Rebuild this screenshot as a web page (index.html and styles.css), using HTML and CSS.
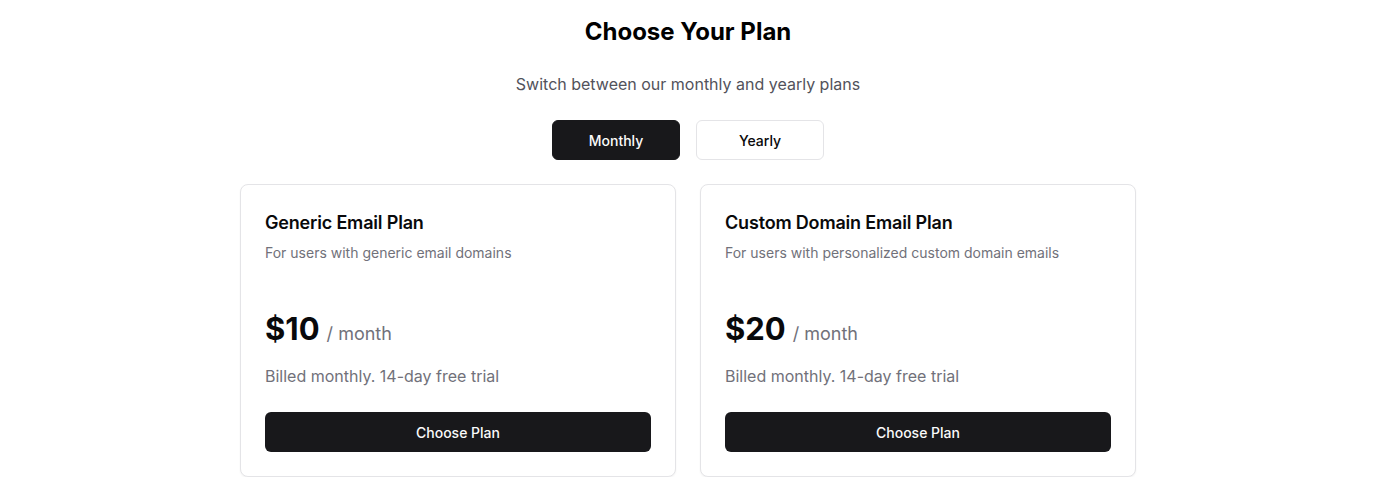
FILE: index.html
```html
<!DOCTYPE html>
<html lang="en">
<head>
<meta charset="utf-8">
<title>Choose Your Plan</title>
<link rel="stylesheet" href="styles.css">
</head>
<body>
<main class="page">
  <h1 class="title">Choose Your Plan</h1>
  <p class="subtitle">Switch between our monthly and yearly plans</p>
  <div class="toggle">
    <button class="tbtn active">Monthly</button>
    <button class="tbtn">Yearly</button>
  </div>
  <div class="cards">
    <section class="card">
      <div class="card-header">
        <h2 class="card-title">Generic Email Plan</h2>
        <p class="card-desc">For users with generic email domains</p>
      </div>
      <div class="card-content">
        <div class="price"><span class="amount">$10</span><span class="per">/ month</span></div>
        <p class="billed">Billed monthly. 14-day free trial</p>
        <button class="choose">Choose Plan</button>
      </div>
    </section>
    <section class="card">
      <div class="card-header">
        <h2 class="card-title">Custom Domain Email Plan</h2>
        <p class="card-desc">For users with personalized custom domain emails</p>
      </div>
      <div class="card-content">
        <div class="price"><span class="amount">$20</span><span class="per">/ month</span></div>
        <p class="billed">Billed monthly. 14-day free trial</p>
        <button class="choose">Choose Plan</button>
      </div>
    </section>
  </div>
</main>
</body>
</html>
```
FILE: styles.css
```css
* { box-sizing: border-box; }
html, body { margin: 0; padding: 0; background: #ffffff; }
body {
  font-family: Inter, "Noto Sans", "Liberation Sans", sans-serif;
  color: #09090b;
  -webkit-font-smoothing: antialiased;
}
.page {
  max-width: 896px;
  margin: 0 auto;
  padding-top: 16px;
  display: flex;
  flex-direction: column;
  align-items: center;
}
.title {
  margin: 0;
  font-size: 24px;
  line-height: 32px;
  font-weight: 700;
  color: #000;
}
.subtitle {
  margin: 24px 0 0;
  font-size: 16px;
  line-height: 24px;
  color: #52525b;
}
.toggle {
  margin-top: 24px;
  display: flex;
  gap: 16px;
}
.tbtn {
  width: 128px;
  height: 40px;
  border-radius: 6px;
  border: 1px solid #e4e4e7;
  background: #fff;
  color: #09090b;
  font-family: inherit;
  font-size: 14px;
  font-weight: 500;
  cursor: pointer;
}
.tbtn.active {
  background: #18181b;
  border-color: #18181b;
  color: #fafafa;
}
.cards {
  margin-top: 24px;
  width: 100%;
  display: grid;
  grid-template-columns: 1fr 1fr;
  gap: 24px;
}
.card {
  border: 1px solid #e4e4e7;
  border-radius: 8px;
  background: #fff;
  box-shadow: 0 1px 2px rgba(0,0,0,0.05);
}
.card-header {
  padding: 24px 24px 24px;
  display: flex;
  flex-direction: column;
  gap: 6px;
}
.card-title {
  margin: 0;
  font-size: 18px;
  line-height: 28px;
  font-weight: 600;
  letter-spacing: -0.01em;
}
.card-desc {
  margin: 0;
  font-size: 14px;
  line-height: 20px;
  color: #71717a;
}
.card-content {
  padding: 24px 24px 24px;
  display: flex;
  flex-direction: column;
}
.price {
  display: flex;
  align-items: baseline;
  gap: 7px;
  line-height: 36px;
}
.amount {
  font-size: 31px;
  font-weight: 700;
}
.per {
  font-size: 18px;
  color: #71717a;
}
.billed {
  margin: 12px 0 0;
  font-size: 16px;
  line-height: 24px;
  color: #71717a;
}
.choose {
  margin-top: 24px;
  height: 40px;
  border: none;
  border-radius: 6px;
  background: #18181b;
  color: #fafafa;
  font-family: inherit;
  font-size: 14px;
  font-weight: 500;
  cursor: pointer;
}
```
